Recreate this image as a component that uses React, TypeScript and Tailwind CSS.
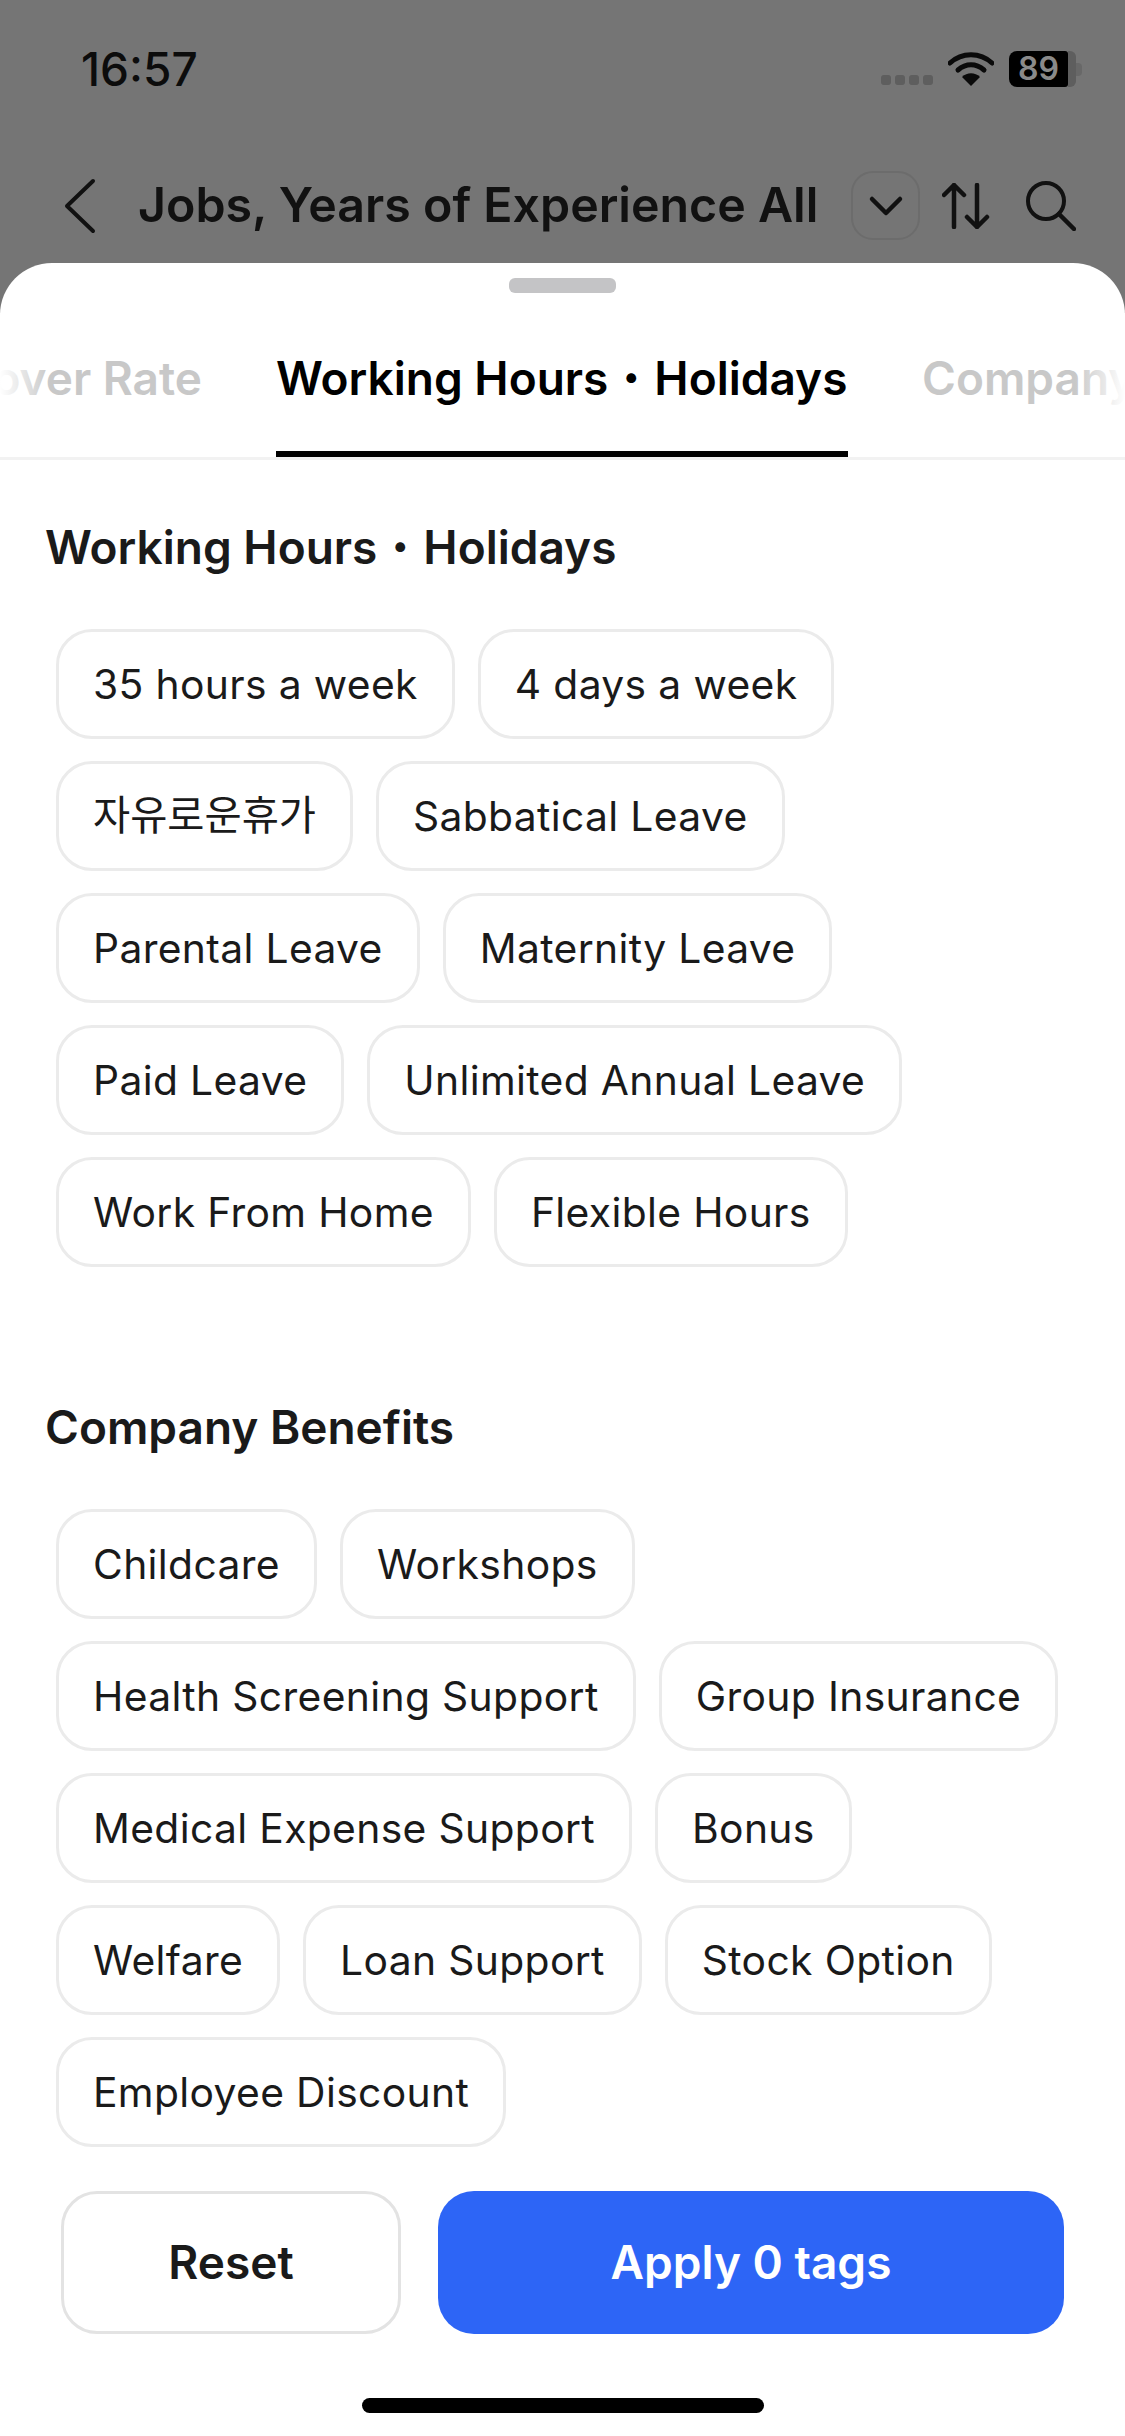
import type { ReactNode } from 'react';

const workingTags = [
  '35 hours a week',
  '4 days a week',
  '자유로운휴가',
  'Sabbatical Leave',
  'Parental Leave',
  'Maternity Leave',
  'Paid Leave',
  'Unlimited Annual Leave',
  'Work From Home',
  'Flexible Hours',
];

const benefitTags = [
  'Childcare',
  'Workshops',
  'Health Screening Support',
  'Group Insurance',
  'Medical Expense Support',
  'Bonus',
  'Welfare',
  'Loan Support',
  'Stock Option',
  'Employee Discount',
];

function TagList({ tags }: { tags: string[] }) {
  return (
    <div className="flex flex-wrap gap-x-[23px] gap-y-[22px] px-[56px]">
      {tags.map((tag) => (
        <div
          key={tag}
          className="h-[110px] flex items-center px-[34px] rounded-[36px] border-[3px] border-[#ebebeb] font-[430] text-[#1a1a1a] whitespace-nowrap"
        >
          {/* the Korean tag runs a little narrower than the Latin ones */}
          <span className={tag === '자유로운휴가' ? 'text-[40.4px] leading-[60px]' : 'text-[40.8px] leading-[60px] tracking-[0.35px]'}>{tag}</span>
        </div>
      ))}
    </div>
  );
}

function Section({ title, tags }: { title: ReactNode; tags: string[] }) {
  return (
    <div>
      <h2 className="px-[45px] h-[56px] flex items-center text-[46px] font-semibold text-[#1a1a1a] whitespace-nowrap mb-[54px]">
        {title}
      </h2>
      <TagList tags={tags} />
    </div>
  );
}

const workingTitle = (
  <>
    Working Hours<span className="font-normal">・</span>Holidays
  </>
);

export default function App() {
  return (
    <div
      className="w-[1125px] h-[2436px] bg-[#757575] overflow-hidden flex flex-col"
      style={{ fontFamily: 'Inter, "Noto Sans CJK KR", sans-serif' }}
    >
      {/* status bar */}
      <div className="h-[138px] pl-[81px] pr-[43px] flex items-center justify-between shrink-0">
        <span className="text-[46px] font-medium text-[#0c0c0c] leading-none">16:57</span>
        <div className="flex items-center">
          <div className="flex gap-[4px] mt-[22px] mr-[15px]">
            <span className="w-[10px] h-[10px] rounded-[3px] bg-[#5e5e5e]" />
            <span className="w-[10px] h-[10px] rounded-[3px] bg-[#5e5e5e]" />
            <span className="w-[10px] h-[10px] rounded-[3px] bg-[#5e5e5e]" />
            <span className="w-[10px] h-[10px] rounded-[3px] bg-[#5e5e5e]" />
          </div>
          <svg width="46" height="34" viewBox="0 0 46 34" fill="none" className="mr-[15px]">
            <path d="M2 11C14 0 32 0 44 11" stroke="#0a0a0a" strokeWidth="5" strokeLinecap="round" />
            <path d="M10 18C18 11 28 11 36 18" stroke="#0a0a0a" strokeWidth="5" strokeLinecap="round" />
            <path d="M23 34L14 25C19 20 27 20 32 25Z" fill="#0a0a0a" />
          </svg>
          <div className="w-[59px] h-[36px] rounded-l-[8px] rounded-r-[3px] bg-black flex items-center justify-center text-[32px] font-semibold text-[#8a8a8a] leading-none">
            89
          </div>
          <div className="w-[8px] h-[36px] rounded-r-[6px] bg-[#5e5e5e]" />
          <div className="w-[6px] h-[13px] rounded-r-[4px] bg-[#686868]" />
        </div>
      </div>

      {/* dimmed nav behind the sheet */}
      <div className="h-[125px] pt-[10px] pl-[63px] flex items-center shrink-0">
        <svg width="34" height="56" viewBox="0 0 34 56" fill="none" className="shrink-0">
          <path d="M30 3L4 28L30 53" stroke="#111" strokeWidth="4" strokeLinecap="round" strokeLinejoin="round" />
        </svg>
        <span className="ml-[41px] w-[680px] text-[48.3px] font-semibold text-[#111] leading-none whitespace-nowrap">
          Jobs, Years of Experience All
        </span>
        <div className="ml-[33px] w-[69px] h-[69px] rounded-[22px] border-[2px] border-[#6c6c6c] flex items-center justify-center shrink-0">
          <svg width="36" height="24" viewBox="0 0 36 24" fill="none">
            <path d="M4 5L18 19L32 5" stroke="#111" strokeWidth="4.5" strokeLinecap="round" strokeLinejoin="round" />
          </svg>
        </div>
        <svg width="48" height="46" viewBox="0 0 48 46" fill="none" className="ml-[22px] shrink-0">
          <path d="M12 44V2M2 12L12 2L22 12" stroke="#111" strokeWidth="4.5" strokeLinecap="round" strokeLinejoin="round" />
          <path d="M35 2V44M25 34L35 44L45 34" stroke="#111" strokeWidth="4.5" strokeLinecap="round" strokeLinejoin="round" />
        </svg>
        <svg width="50" height="50" viewBox="0 0 50 50" fill="none" className="ml-[36px] shrink-0">
          <circle cx="20" cy="20" r="18" stroke="#111" strokeWidth="4" />
          <path d="M33 33L48 48" stroke="#111" strokeWidth="4.5" strokeLinecap="round" />
        </svg>
      </div>

      {/* bottom sheet */}
      <div className="flex-1 bg-white rounded-t-[52px] flex flex-col overflow-hidden">
        <div className="pt-[15px] flex justify-center shrink-0">
          <div className="w-[107px] h-[15px] rounded-[6px] bg-[#c4c4c6]" />
        </div>

        <div className="relative mt-[20px] h-[147px] flex overflow-hidden border-b-[3px] border-[#f2f2f2] shrink-0">
          <div className="w-[202px] h-full flex items-center justify-end shrink-0 pb-[14px]">
            <span className="text-[46px] font-semibold text-[#c8c8c8] whitespace-nowrap shrink-0">Turnover Rate</span>
          </div>
          <div className="relative ml-[74px] w-[572px] h-full flex items-center text-[46px] font-semibold text-black whitespace-nowrap shrink-0 pb-[14px]">
            {workingTitle}
            <div className="absolute left-0 right-0 bottom-0 h-[6px] bg-black" />
          </div>
          <div className="ml-[74px] h-full flex items-center text-[46px] font-semibold text-[#c8c8c8] whitespace-nowrap shrink-0 pb-[14px]">
            Company Benefits
          </div>
          <div className="absolute left-0 top-0 bottom-0 w-[50px] bg-gradient-to-r from-white to-transparent" />
          <div className="absolute right-0 top-0 bottom-0 w-[50px] bg-gradient-to-l from-white to-transparent" />
        </div>

        <div className="pt-[59px] flex flex-col gap-[132px] shrink-0">
          <Section title={workingTitle} tags={workingTags} />
          <Section title="Company Benefits" tags={benefitTags} />
        </div>

        <div className="mt-[44px] px-[61px] flex gap-[37px] shrink-0">
          <button className="w-[340px] h-[143px] rounded-[36px] border-[3px] border-[#e3e3e3] text-[46px] font-semibold text-[#1a1a1a]">
            Reset
          </button>
          <button className="flex-1 h-[143px] rounded-[36px] bg-[#2d65f6] text-[46px] font-semibold text-white">
            Apply 0 tags
          </button>
        </div>

        <div className="mt-[64px] flex justify-center shrink-0">
          <div className="w-[402px] h-[15px] rounded-full bg-black" />
        </div>
      </div>
    </div>
  );
}
